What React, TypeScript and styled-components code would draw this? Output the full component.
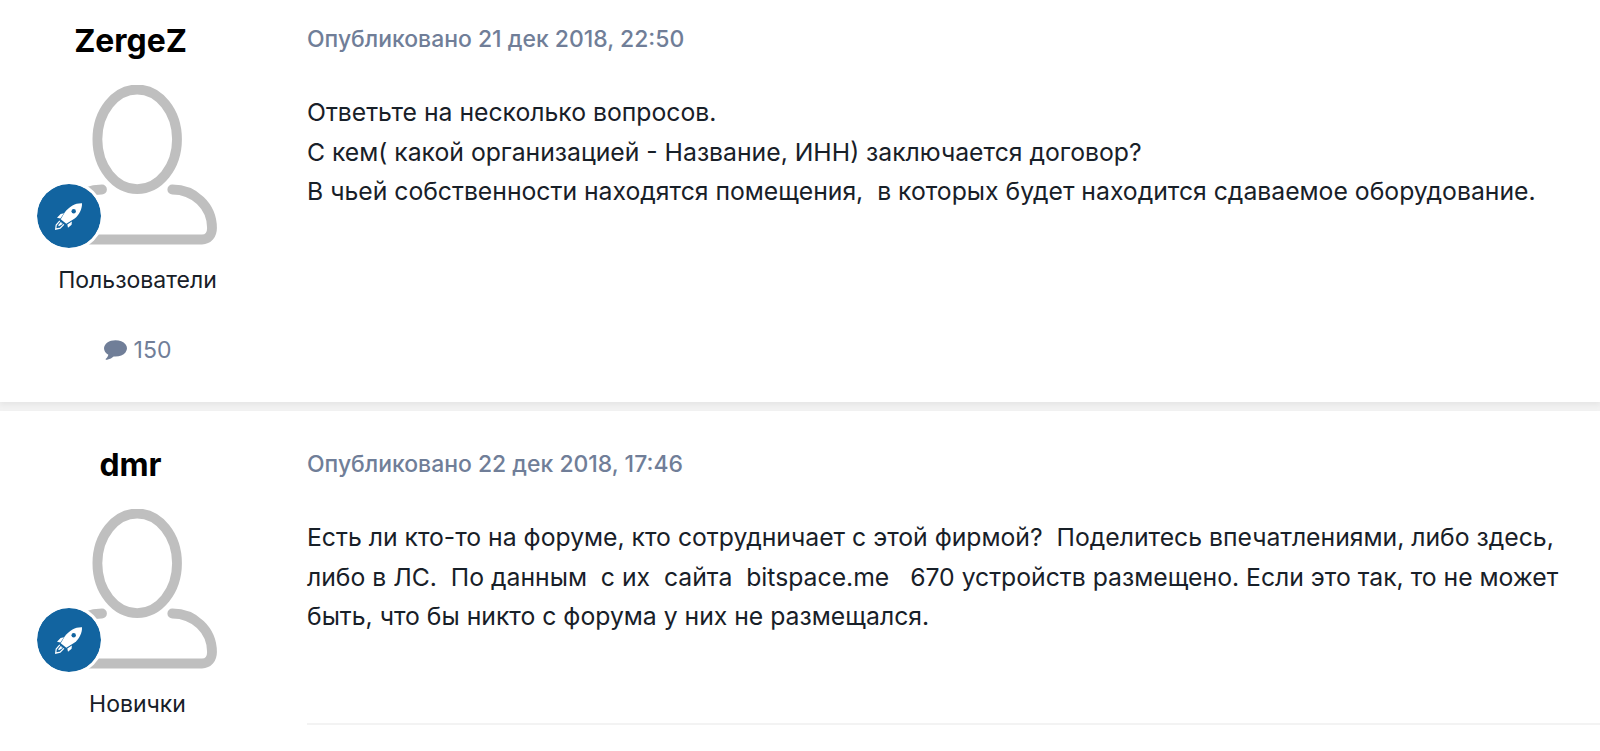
import { Fragment } from "react";
import styled, { createGlobalStyle } from "styled-components";

const GlobalStyle = createGlobalStyle`
  body {
    margin: 0;
    background: #f2f2f2;
    font-family: Inter, "Liberation Sans", sans-serif;
    color: #182028;
  }
`;

const Topic = styled.main`
  display: flex;
  flex-direction: column;
  gap: 9px;
  height: 751px;
  overflow: hidden;
`;

const PostCard = styled.article<{ $last?: boolean }>`
  display: flex;
  flex: none;
  box-sizing: border-box;
  height: ${(props) => (props.$last ? "400px" : "402px")};
  padding-top: ${(props) => (props.$last ? "35px" : "22px")};
  background: #fff;
  box-shadow: 0 3px 5px rgba(0, 0, 0, 0.05);
`;

const Author = styled.aside`
  display: flex;
  flex-direction: column;
  align-items: center;
  flex: none;
  width: 274px;
`;

const AuthorName = styled.h3`
  margin: 0 13px 0 0;
  font-size: 31.9px;
  font-weight: 700;
  line-height: 38px;
  color: #000;
`;

const Avatar = styled.div`
  position: relative;
  width: 160px;
  height: 160px;
  margin-top: 25px;
`;

const RankBadge = styled.div`
  position: absolute;
  left: -23.5px;
  bottom: -6px;
  display: flex;
  width: 64px;
  height: 64px;
  border: 3.5px solid #fff;
  border-radius: 50%;
  background: #1264a0;
  background-clip: padding-box;
`;

const Group = styled.div`
  margin: 20px 0 0 1px;
  font-size: 23px;
  line-height: 30px;
`;

const PostCount = styled.div`
  display: flex;
  align-items: center;
  gap: 7px;
  margin: 40px 0 0 1px;
  font-size: 23px;
  line-height: 30px;
  color: #707e98;
`;

const Content = styled.section<{ $last?: boolean }>`
  display: flex;
  flex-direction: column;
  flex: 1;
  margin-left: 33px;
  padding-top: ${(props) => (props.$last ? "1px" : "0")};
`;

const Published = styled.div`
  font-size: 22.94px;
  font-weight: 500;
  line-height: 34px;
  color: #707e98;
`;

const Message = styled.div`
  margin-top: 37px;
  font-size: 24.74px;
  line-height: 39.7px;
  white-space: pre;
`;

const Separator = styled.hr`
  width: 100%;
  height: 2px;
  margin: 86px 0 0;
  border: 0;
  background: #f3f3f3;
`;

function PersonPicture() {
  return (
    <svg width="160" height="160" viewBox="0 0 160 160" fill="none" stroke="#bfbfbf" strokeWidth="9.8" strokeLinecap="round">
      <ellipse cx="80.2" cy="54.3" rx="39.8" ry="49.8" />
      <path d="M115.300 104.500C137 104.500 155 121 155 143C155 150 151 154.500 145 154.500H15C9 154.500 5 150 5 143C5 121 23 104.500 45 104.500" />
    </svg>
  );
}

function RocketIcon() {
  return (
    <svg width="64" height="64" viewBox="0 0 64 64" fill="none">
      <path d="M45 19.300C41 19.200 38.500 20 35.500 21.600C32.500 23.200 29.500 26 27.700 28.600L23.700 35.300L29.300 39.800L37.700 34.500C42 31.500 45.300 25 45 19.300Z" fill="#fff" />
      <circle cx="36.700" cy="27.200" r="2.200" fill="#1264a0" />
      <path d="M27 29.300L23.600 30L20 33.800L23.400 34.600ZM30.300 40.400L34.900 37.400L34.600 40.700L31 43.800Z" fill="#fff" />
      <path d="M22.800 36.900L19.200 41L18.700 45.200L23.100 44.200L26.900 40.400M24.300 38.300L21.600 41.700L25.400 39.500" stroke="#fff" strokeWidth="1.200" />
    </svg>
  );
}

function CommentIcon() {
  return (
    <svg width="23" height="20" viewBox="0 256 1792 1536" fill="currentColor">
      <path d="M1792 896q0 174-120 321.500t-326 233-450 85.500q-70 0-145-8-198 175-460 242-49 14-114 22-17 2-30.500-9t-17.500-29v-1q-3-4-.5-12t2-10 4.500-9.500l6-9 7-8.500 8-9q7-8 31-34.500t34.500-38 31-39.500 32.500-51 27-59 26-76q-157-89-247.500-220t-90.500-281q0-130 71-248.500t191-204.500 286-136.500 348-50.500q244 0 450 85.500t326 233 120 321.500z" />
    </svg>
  );
}

const posts = [
  {
    name: "ZergeZ",
    group: "Пользователи",
    count: 150,
    date: "21 дек 2018, 22:50",
    text: [
      "Ответьте на несколько вопросов.",
      "С кем( какой организацией - Название, ИНН) заключается договор?",
      "В чьей собственности находятся помещения,  в которых будет находится сдаваемое оборудование.",
    ],
  },
  {
    name: "dmr",
    group: "Новички",
    date: "22 дек 2018, 17:46",
    text: [
      "Есть ли кто-то на форуме, кто сотрудничает с этой фирмой?  Поделитесь впечатлениями, либо здесь,",
      "либо в ЛС.  По данным  с их  сайта  bitspace.me   670 устройств размещено. Если это так, то не может",
      "быть, что бы никто с форума у них не размещался.",
    ],
  },
];

function Post({ post, last }: { post: (typeof posts)[number]; last: boolean }) {
  return (
    <PostCard $last={last}>
      <Author>
        <AuthorName>{post.name}</AuthorName>
        <Avatar>
          <PersonPicture />
          <RankBadge>
            <RocketIcon />
          </RankBadge>
        </Avatar>
        <Group>{post.group}</Group>
        {post.count && (
          <PostCount>
            <CommentIcon />
            {post.count}
          </PostCount>
        )}
      </Author>
      <Content $last={last}>
        <Published>Опубликовано {post.date}</Published>
        <Message>
          {post.text.map((line) => (
            <Fragment key={line}>
              {line}
              <br />
            </Fragment>
          ))}
        </Message>
        {last && <Separator />}
      </Content>
    </PostCard>
  );
}

function App() {
  return (
    <Topic>
      <GlobalStyle />
      {posts.map((post, index) => (
        <Post key={post.name} post={post} last={index === posts.length - 1} />
      ))}
    </Topic>
  );
}

export default App;
